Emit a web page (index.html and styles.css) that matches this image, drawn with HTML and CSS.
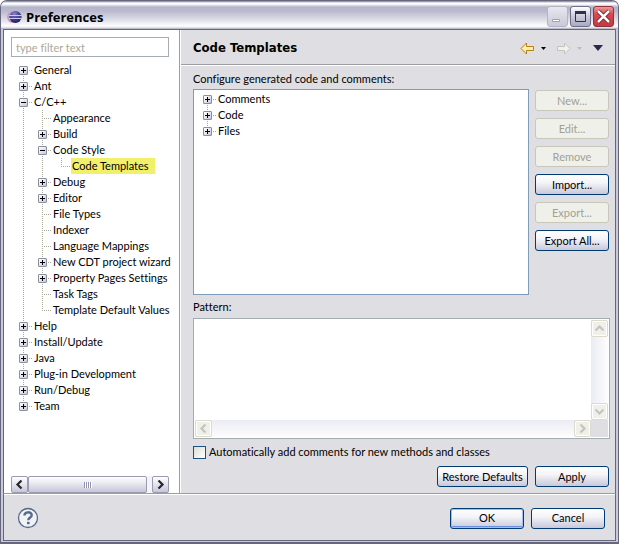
FILE: index.html
```html
<!DOCTYPE html>
<html lang="en">
<head>
<meta charset="utf-8">
<title>Preferences</title>
<link rel="stylesheet" href="styles.css">
</head>
<body>
<svg class="defs" aria-hidden="true">
  <symbol id="plus" viewBox="0 0 9 9"><path d="M2 4h5v1H2zM4 2h1v5H4z" fill="#000"/></symbol>
  <symbol id="minus" viewBox="0 0 9 9"><path d="M2 4h5v1H2z" fill="#000"/></symbol>
  <symbol id="chev-left" viewBox="0 0 9 9"><path d="M6.5 0.5 2.5 4.5l4 4" fill="none" stroke="currentColor" stroke-width="2.2"/></symbol>
  <symbol id="chev-right" viewBox="0 0 9 9"><path d="M2.5 0.5l4 4-4 4" fill="none" stroke="currentColor" stroke-width="2.2"/></symbol>
  <symbol id="chev-up" viewBox="0 0 9 9"><path d="M0.5 6.5l4-4 4 4" fill="none" stroke="currentColor" stroke-width="2.2"/></symbol>
  <symbol id="chev-down" viewBox="0 0 9 9"><path d="M0.5 2.5l4 4 4-4" fill="none" stroke="currentColor" stroke-width="2.2"/></symbol>
</svg>
<div class="window">
  <header class="titlebar">
    <svg class="app-icon" width="15" height="14" viewBox="0 0 15 14" aria-hidden="true">
      <defs>
        <radialGradient id="ball" cx=".4" cy=".25" r=".8"><stop offset="0" stop-color="#8a86c4"/><stop offset=".6" stop-color="#3b3585"/><stop offset="1" stop-color="#211c63"/></radialGradient>
      </defs>
      <circle cx="6" cy="7" r="6" fill="#c79bc4"/>
      <circle cx="8.5" cy="7" r="6" fill="url(#ball)"/>
      <path d="M2 5.500h12.500M2 8.500h12.500" stroke="#c9cdf0"/>
      <path d="M2 7h12.500" stroke="#5753a3"/>
    </svg>
    <h1>Preferences</h1>
    <div class="window-buttons">
      <button class="win-btn minimize" aria-label="Minimize"><svg width="19" height="19" viewBox="0 0 19 19"><path d="M4.500 12.500h7v2h-7z" fill="#fff" stroke="#a0a0b4"/></svg></button>
      <button class="win-btn maximize" aria-label="Maximize"><svg width="19" height="19" viewBox="0 0 19 19"><path d="M4.500 4.500h10v10h-10z" fill="none" stroke="#30304c"/><path d="M4 4h11v3H4z" fill="#30304c"/></svg></button>
      <button class="win-btn close" aria-label="Close"><svg width="19" height="19" viewBox="0 0 19 19"><path d="M4 4l11 11M15 4 4 15" stroke="#5f1620" stroke-width="4"/><path d="M4 4l11 11M15 4 4 15" stroke="#fff" stroke-width="2.500"/></svg></button>
    </div>
  </header>
  <div class="client">
    <nav class="sidebar">
      <input class="filter" type="text" placeholder="type filter text" aria-label="type filter text">
      <ul class="tree">
        <li><div class="row"><button class="exp" aria-label="Expand General"><svg><use href="#plus"/></svg></button><span>General</span></div></li>
        <li><div class="row"><button class="exp" aria-label="Expand Ant"><svg><use href="#plus"/></svg></button><span>Ant</span></div></li>
        <li><div class="row"><button class="exp" aria-label="Collapse C/C++"><svg><use href="#minus"/></svg></button><span>C/C++</span></div>
          <ul>
            <li><div class="row"><span>Appearance</span></div></li>
            <li><div class="row"><button class="exp" aria-label="Expand Build"><svg><use href="#plus"/></svg></button><span>Build</span></div></li>
            <li><div class="row"><button class="exp" aria-label="Collapse Code Style"><svg><use href="#minus"/></svg></button><span>Code Style</span></div>
              <ul>
                <li><div class="row"><span class="selected">Code Templates</span></div></li>
              </ul>
            </li>
            <li><div class="row"><button class="exp" aria-label="Expand Debug"><svg><use href="#plus"/></svg></button><span>Debug</span></div></li>
            <li><div class="row"><button class="exp" aria-label="Expand Editor"><svg><use href="#plus"/></svg></button><span>Editor</span></div></li>
            <li><div class="row"><span>File Types</span></div></li>
            <li><div class="row"><span>Indexer</span></div></li>
            <li><div class="row"><span>Language Mappings</span></div></li>
            <li><div class="row"><button class="exp" aria-label="Expand New CDT project wizard"><svg><use href="#plus"/></svg></button><span>New CDT project wizard</span></div></li>
            <li><div class="row"><button class="exp" aria-label="Expand Property Pages Settings"><svg><use href="#plus"/></svg></button><span>Property Pages Settings</span></div></li>
            <li><div class="row"><span>Task Tags</span></div></li>
            <li><div class="row"><span>Template Default Values</span></div></li>
          </ul>
        </li>
        <li><div class="row"><button class="exp" aria-label="Expand Help"><svg><use href="#plus"/></svg></button><span>Help</span></div></li>
        <li><div class="row"><button class="exp" aria-label="Expand Install/Update"><svg><use href="#plus"/></svg></button><span>Install/Update</span></div></li>
        <li><div class="row"><button class="exp" aria-label="Expand Java"><svg><use href="#plus"/></svg></button><span>Java</span></div></li>
        <li><div class="row"><button class="exp" aria-label="Expand Plug-in Development"><svg><use href="#plus"/></svg></button><span>Plug-in Development</span></div></li>
        <li><div class="row"><button class="exp" aria-label="Expand Run/Debug"><svg><use href="#plus"/></svg></button><span>Run/Debug</span></div></li>
        <li><div class="row"><button class="exp" aria-label="Expand Team"><svg><use href="#plus"/></svg></button><span>Team</span></div></li>
      </ul>
      <div class="hscroll">
        <button class="scroll-btn" aria-label="Scroll left"><svg><use href="#chev-left"/></svg></button>
        <div class="thumb"><i></i></div>
        <button class="scroll-btn" aria-label="Scroll right"><svg><use href="#chev-right"/></svg></button>
      </div>
    </nav>
    <main class="page">
      <div class="page-head">
        <h2>Code Templates</h2>
        <div class="history">
          <button class="tool" aria-label="Back"><svg width="15" height="13" viewBox="0 0 15 13"><path d="M1 6.500 6.500 1v3.500h7v4h-7V12z" fill="#fdeeb0" stroke="#b87f14" stroke-linejoin="round"/></svg></button>
          <button class="tool drop" aria-label="Back history"><svg width="5" height="3" viewBox="0 0 5 3"><path d="M0 0h5L2.500 3z" fill="#000"/></svg></button>
          <button class="tool" aria-label="Forward" disabled><svg width="15" height="13" viewBox="0 0 15 13"><path d="M14 6.500 8.500 1v3.500h-7v4h7V12z" fill="#f0f0ec" stroke="#c3c3bd" stroke-linejoin="round"/></svg></button>
          <button class="tool drop" aria-label="Forward history" disabled><svg width="5" height="3" viewBox="0 0 5 3"><path d="M0 0h5L2.500 3z" fill="#bcbcb8"/></svg></button>
          <button class="tool menu" aria-label="Menu"><svg width="10" height="6" viewBox="0 0 10 6"><path d="M0 0h10L5 6z" fill="#2b2750"/></svg></button>
        </div>
      </div>
      <div class="page-body">
        <p class="caption">Configure generated code and comments:</p>
        <div class="templates">
          <div class="template-box">
            <ul class="tree">
              <li><div class="row"><button class="exp" aria-label="Expand Comments"><svg><use href="#plus"/></svg></button><span>Comments</span></div></li>
              <li><div class="row"><button class="exp" aria-label="Expand Code"><svg><use href="#plus"/></svg></button><span>Code</span></div></li>
              <li><div class="row"><button class="exp" aria-label="Expand Files"><svg><use href="#plus"/></svg></button><span>Files</span></div></li>
            </ul>
          </div>
          <div class="actions">
            <button class="btn" disabled>New...</button>
            <button class="btn" disabled>Edit...</button>
            <button class="btn" disabled>Remove</button>
            <button class="btn">Import...</button>
            <button class="btn" disabled>Export...</button>
            <button class="btn">Export All...</button>
          </div>
        </div>
        <label class="caption" for="pattern">Pattern:</label>
        <div class="pattern-box">
          <textarea id="pattern" readonly></textarea>
          <div class="vtrack">
            <button class="scroll-btn off" aria-label="Scroll up" disabled><svg><use href="#chev-up"/></svg></button>
            <button class="scroll-btn off" aria-label="Scroll down" disabled><svg><use href="#chev-down"/></svg></button>
          </div>
          <div class="htrack">
            <button class="scroll-btn off" aria-label="Scroll left" disabled><svg><use href="#chev-left"/></svg></button>
            <button class="scroll-btn off" aria-label="Scroll right" disabled><svg><use href="#chev-right"/></svg></button>
          </div>
          <div class="corner"></div>
        </div>
        <div class="check">
          <input type="checkbox" id="auto"><label for="auto">Automatically add comments for new methods and classes</label>
        </div>
        <div class="page-actions">
          <button class="btn wide">Restore Defaults</button>
          <button class="btn">Apply</button>
        </div>
      </div>
    </main>
  </div>
  <footer class="footer">
    <button class="help" aria-label="Help"><svg width="22" height="22" viewBox="0 0 22 22"><circle cx="11" cy="11" r="9.500" fill="#f1f2f6" stroke="#566a8c" stroke-width="1.300"/><path d="M7.500 8.600c0-4.400 7.200-4.200 7.200-.4 0 2.400-3.400 2.400-3.400 5" fill="none" stroke="#566a8c" stroke-width="2.400"/><path d="M10 14.800h2.600v2.400H10z" fill="#566a8c"/></svg></button>
    <button class="btn default">OK</button>
    <button class="btn">Cancel</button>
  </footer>
</div>
</body>
</html>
```
FILE: styles.css
```css
* { box-sizing: border-box; }

body {
  margin: 0;
  font: 11px/16px Lato, "Liberation Sans", sans-serif;
  font-variant-ligatures: none;
  color: #000;
  background: #fff;
}

button, input, textarea { font: inherit; color: inherit; margin: 0; }
button { padding: 0; }
h1, h2, p, ul { margin: 0; padding: 0; }
ul { list-style: none; }
svg { display: block; }
.defs { position: absolute; width: 0; height: 0; }

.window {
  display: flex;
  flex-direction: column;
  min-height: 100vh;
  border: 1px solid #66667f;
  border-bottom-width: 2px;
  border-radius: 7px 7px 0 0;
  background: #c9c9da;
  padding: 0 2px 1px;
}

.titlebar {
  display: flex;
  align-items: center;
  height: 28px;
  margin: 0 -2px;
  padding: 3px 4px 0 6px;
  border-radius: 6px 6px 0 0;
  background: linear-gradient(#77778f 0, #fff 2px, #fff 3px, #b4b4cb 6px, #b9b9ce 10px, #e3e3ec 20px, #fff 25px, #d8d8e4 27px, #a0a0b4 28px);
}
.app-icon { margin-right: 4px; }
.titlebar h1 { flex: 1; font: bold 13px/20px "Open Sans", "Noto Sans", sans-serif; }
.window-buttons { display: flex; gap: 2px; }
.win-btn {
  width: 21px;
  height: 21px;
  border: 1px solid #6f6f8c;
  border-radius: 3px;
  background: linear-gradient(#fff, #c9c9da 50%, #a9a9c2);
}
.win-btn.minimize { border-color: #b4b4c6; background: linear-gradient(#e8e8f0, #c9c9d8); }
.win-btn.close { border-color: #8d3440; background: linear-gradient(#ee9a98, #d9484c 40%, #c33a40); }

.client {
  flex: 1;
  display: grid;
  grid-template-columns: 176px 1fr;
  border: 1px solid #66667f;
  border-width: 1px 1px 0;
  background: #dfdee3;
}

.sidebar {
  display: flex;
  flex-direction: column;
  min-width: 0;
  padding: 7px 10px 0 7px;
  border-right: 1px solid #9d9da1;
  background: #fff;
}
.filter {
  width: 100%;
  height: 20px;
  padding: 0 4px;
  border: 1px solid #a5acb2;
  border-radius: 0;
  background: #fff;
}
.filter::placeholder { color: #aca899; opacity: 1; }

.tree { padding: 5px 0 0 8px; overflow: hidden; white-space: nowrap; }
.sidebar > .tree { flex: 1; margin-right: -8px; }
.tree ul { padding-left: 19px; }
.tree li { position: relative; }
.tree li::before {
  content: "";
  position: absolute;
  left: 4px;
  top: 0;
  bottom: 0;
  width: 1px;
  background: repeating-linear-gradient(#aca899 0 1px, #fff 1px 2px);
}
.tree li:last-child::before { bottom: auto; height: 8px; }
.tree > li:first-child::before { top: 8px; }
.row { position: relative; height: 16px; padding-left: 15px; line-height: 16px; }
.row::before {
  content: "";
  position: absolute;
  left: 4px;
  top: 8px;
  width: 9px;
  height: 1px;
  background: repeating-linear-gradient(90deg, #aca899 0 1px, #fff 1px 2px);
}
.exp {
  position: absolute;
  left: 0;
  top: 4px;
  width: 9px;
  height: 9px;
  border: 1px solid #8a8fa0;
  border-radius: 1px;
  background: linear-gradient(135deg, #fff, #c9c9da);
}
.exp svg { width: 9px; height: 9px; margin: -1px; }
.selected { display: inline-block; height: 16px; margin-left: -1px; padding: 0 6px 0 1px; background: #f2f06a; }

.hscroll { display: flex; height: 17px; background: #f3f3f8; }
.scroll-btn, .thumb {
  display: flex;
  align-items: center;
  justify-content: center;
  width: 17px;
  height: 17px;
  border: 1px solid #9a9ab0;
  border-radius: 2px;
  background: linear-gradient(#fff, #e4e4ee 50%, #c6c6d8);
  color: #26262e;
}
.scroll-btn svg { width: 9px; height: 9px; }
.thumb { flex: 1; margin-right: 5px; }
.thumb i { width: 8px; height: 6px; background: repeating-linear-gradient(90deg, #8f93ad 0 1px, #fff 1px 2px); }

.page { display: flex; flex-direction: column; min-width: 0; border-left: 1px solid #fff; }
.page-head {
  display: flex;
  align-items: center;
  justify-content: space-between;
  height: 35px;
  padding: 2px 12px 0 12px;
  border-bottom: 1px solid #9d9da1;
  box-shadow: 0 1px #fff;
}
.page-head h2 { font: bold 13px/20px "DejaVu Sans Condensed", "Noto Sans", sans-serif; }
.history { display: flex; align-items: center; }
.tool { border: 0; background: none; }
.tool.drop { margin: 0 10px 0 6px; }
.tool.menu { margin-left: 1px; }

.page-body { flex: 1; display: flex; flex-direction: column; padding: 6px 5px 6px 12px; }
.caption { display: block; height: 16px; }
.templates { flex: 1; display: flex; gap: 6px; margin: 2px 1px 4px 0; }
.template-box { flex: 1; border: 1px solid #7f9db9; background: #fff; }
.template-box .tree { padding: 1px 0 0 9px; }
.actions { display: flex; flex-direction: column; gap: 7px; padding-top: 1px; }

.btn {
  width: 74px;
  height: 21px;
  padding: 0;
  border: 1px solid #003c74;
  border-radius: 3px;
  background: linear-gradient(#fff, #f4f4f9 40%, #c8c8da);
  line-height: 18px;
  white-space: nowrap;
}
.btn.wide { width: 91px; }
.btn.default { box-shadow: inset 0 0 0 1px #a4bdf0, inset 0 -2px #6d8fe0; }
.btn:disabled { border-color: #c9c7ba; background: #f0f0ea; color: #a1a192; }

.pattern-box {
  display: grid;
  grid-template-columns: 1fr 17px;
  grid-template-rows: 1fr 17px;
  height: 121px;
  margin-top: 3px;
  padding: 1px;
  border: 1px solid #a5acb2;
  background: #fff;
}
.pattern-box textarea { width: 100%; height: 100%; border: 0; outline: 0; resize: none; background: #fff; overflow: hidden; }
.vtrack, .htrack { display: flex; justify-content: space-between; }
.vtrack { flex-direction: column; background: linear-gradient(90deg, #ebecf3, #fdfdfe); }
.htrack { background: linear-gradient(#ebecf3, #fdfdfe); }
.corner { background: #dfdee3; }
.scroll-btn.off { border-color: #dcdacb; background: #f0f0ea; color: #c5c4bb; box-shadow: inset 0 0 0 1px #fff; }

.check { display: flex; align-items: center; gap: 3px; height: 16px; margin-top: 5px; }
.check input { appearance: none; width: 13px; height: 13px; border: 1px solid #1c5180; background: linear-gradient(135deg, #dcdcd7, #fff); }
.page-actions { display: flex; justify-content: flex-end; gap: 7px; margin: 6px 1px 0 0; }

.footer {
  display: flex;
  align-items: center;
  gap: 7px;
  height: 48px;
  padding: 2px 10px 0 13px;
  border: 1px solid #66667f;
  border-top-color: #9d9da1;
  background: #dfdee3;
  box-shadow: inset 0 1px #fff;
}
.help { margin-right: auto; border: 0; background: none; }
```
